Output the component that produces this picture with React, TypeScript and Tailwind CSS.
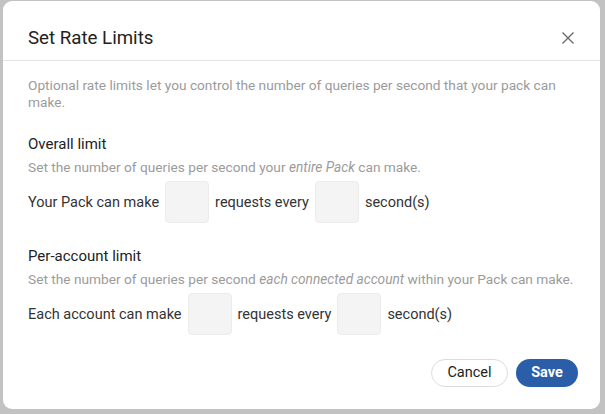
import React from "react";

function Box() {
  return <div className="w-[44px] h-[42px] rounded-[4px] bg-[#f4f4f4] border border-[#ececec] mx-[6px] shrink-0" />;
}

export default function App() {
  return (
    <div className="w-[605px] h-[414px] bg-[#c2c2c2] pl-[3px] pt-[1px]" style={{ fontFamily: "Roboto, 'Noto Sans', sans-serif" }}>
      <div className="w-[597px] h-[408px] bg-white rounded-[9px] flex flex-col">
        <div className="h-[60px] flex items-center justify-between pl-[25px] pr-[26px] pt-[14px] border-b border-[#e4e4e4]">
          <div className="text-[18.7px] leading-[24px] text-[#222]">Set Rate Limits</div>
          <svg width="12" height="12" viewBox="0 0 12 12" className="text-[#666]">
            <path d="M0.5 0.5L11.5 11.5M11.5 0.5L0.5 11.5" stroke="currentColor" strokeWidth="1.3" />
          </svg>
        </div>
        <div className="pl-[25px] pr-[22px] pt-[16px] text-[13.7px] leading-[17px]">
          <p className="text-[#9b9b9b]">
            Optional rate limits let you control the number of queries per second that your pack can make.
          </p>
          <div className="mt-[23px] text-[15px] leading-[20px] text-[#222]">Overall limit</div>
          <div className="mt-[5px] text-[#9b9b9b]">
            Set the number of queries per second your <i>entire Pack</i> can make.
          </div>
          <div className="mt-[5px] flex items-center text-[14.5px] text-[#333]">
            <span>Your Pack can make</span>
            <Box />
            <span>requests every</span>
            <Box />
            <span>second(s)</span>
          </div>
          <div className="mt-[23px] text-[15px] leading-[20px] text-[#222]">Per-account limit</div>
          <div className="mt-[5px] text-[#9b9b9b]">
            Set the number of queries per second <i>each connected account</i> within your Pack can make.
          </div>
          <div className="mt-[5px] flex items-center text-[14.5px] text-[#333]">
            <span>Each account can make</span>
            <Box />
            <span>requests every</span>
            <Box />
            <span>second(s)</span>
          </div>
        </div>
        <div className="mt-[24px] flex justify-end gap-[8px] pr-[22px]">
          <button className="h-[28px] w-[77px] rounded-full border border-[#dcdcdc] bg-white text-[14.5px] text-[#222]">Cancel</button>
          <button className="h-[28px] w-[62px] rounded-full bg-[#2a5ea9] text-[14.5px] font-bold text-white">Save</button>
        </div>
      </div>
    </div>
  );
}
